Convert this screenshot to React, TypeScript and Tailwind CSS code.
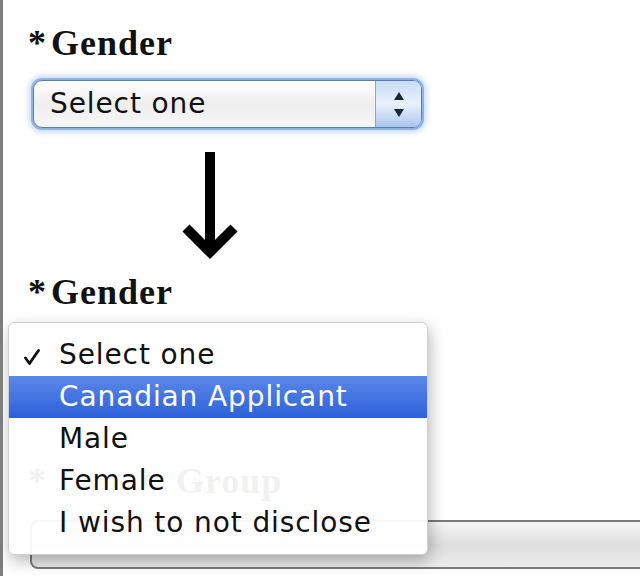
const serif = "font-['Liberation_Serif',serif] font-bold text-[36px] leading-none tracking-[1px] text-[#111]";
const sans = "font-['DejaVu_Sans',sans-serif] text-[28px] tracking-[0.9px]";

function Label({ text, className = "" }: { text: string; className?: string }) {
  return (
    <div className={`${serif} pl-[28px] ${className}`}>
      <span className="mr-[4px]">*</span>
      {text}
    </div>
  );
}

const options = ["Select one", "Canadian Applicant", "Male", "Female", "I wish to not disclose"];

export default function App() {
  return (
    <div className="relative h-[576px] w-[640px] overflow-hidden border-l-[3px] border-[#7d7d7d] bg-white">
      <div className="-ml-[3px]">
        <Label text="Gender" className="pt-[25px]" />

        {/* closed select, focused */}
        <div className="ml-[33px] mt-[19px] flex h-[48px] w-[389px] overflow-hidden rounded-[9px] border border-[#5a7eb0] bg-gradient-to-b from-white via-[#eeeeee] to-[#f7f7f7] shadow-[0_0_0_2px_rgba(125,168,228,0.8),0_0_6px_4px_rgba(125,168,228,0.45)]">
          <div className={`${sans} flex flex-1 items-center pl-[16px] text-[#111]`}>Select one</div>
          <div className="flex w-[46px] flex-col items-center justify-center gap-[9px] border-l border-[#8ea6c8] bg-gradient-to-b from-[#c9dcf6] via-[#eaf1fc] to-[#a9c5ec]">
            <span className="h-0 w-0 border-x-[5px] border-b-[8px] border-x-transparent border-b-[#1b2638]" />
            <span className="h-0 w-0 border-x-[5px] border-t-[8px] border-x-transparent border-t-[#1b2638]" />
          </div>
        </div>

        <svg className="ml-[180px] mt-[22px] block" width="60" height="110" viewBox="180 150 60 110">
          <line x1="210" y1="152" x2="210" y2="250" stroke="#000" strokeWidth="10" />
          <polyline points="186,228 210,252 234,228" fill="none" stroke="#000" strokeWidth="10" strokeLinejoin="miter" />
        </svg>

        <Label text="Gender" className="mt-[14px]" />

        {/* next field label, mostly hidden behind the open menu */}
        <div className={`${serif} mt-[153px] flex pl-[28px]`}>
          <span>*</span>
          <span className="ml-[129px]">Group</span>
        </div>

        <div className="ml-[30px] mt-[21px] h-[49px] w-[660px] rounded-l-[8px] border-2 border-[#7a7a7a] bg-gradient-to-b from-[#f6f6f6] via-[#dedede] to-[#ececec]" />
      </div>

      {/* open popup menu */}
      <div className="absolute left-[5px] top-[322px] h-[233px] w-[420px] rounded-[6px] border border-[#cfcfcf] bg-white/[0.94] pt-[11px] shadow-[2px_6px_16px_rgba(0,0,0,0.28)]">
        {options.map((o, i) => (
          <div
            key={o}
            className={`${sans} relative h-[42px] pl-[50px] leading-[42px] ${
              i === 1 ? "bg-gradient-to-b from-[#5b88e8] to-[#2d60d8] text-white" : "text-[#111]"
            }`}
          >
            {i === 0 && (
              <svg className="absolute left-[15px] top-[15px]" width="16" height="16" viewBox="0 0 16 16">
                <path d="M1.5 9 L5.5 14.5 L14.5 1.5" fill="none" stroke="#111" strokeWidth="2.8" strokeLinecap="round" strokeLinejoin="round" />
              </svg>
            )}
            {o}
          </div>
        ))}
      </div>
    </div>
  );
}
